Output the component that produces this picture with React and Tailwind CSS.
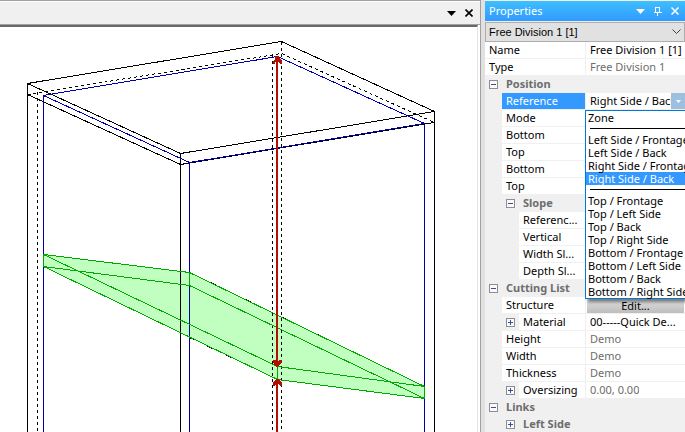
import { useState } from "react";

const groups = [
  ["Zone"],
  ["Left Side / Frontage", "Left Side / Back", "Right Side / Frontage", "Right Side / Back"],
  [
    "Top / Frontage",
    "Top / Left Side",
    "Top / Back",
    "Top / Right Side",
    "Bottom / Frontage",
    "Bottom / Left Side",
    "Bottom / Back",
    "Bottom / Right Side",
  ],
];

function Expander({ open, label }) {
  return (
    <button
      type="button"
      aria-label={`Toggle ${label}`}
      aria-expanded={open}
      className="mx-1 block size-[9px] shrink-0 self-center rounded-[1px] bg-white"
    >
      <svg viewBox="0 0 9 9" className="size-[9px]" shapeRendering="crispEdges">
        <rect x="0.5" y="0.5" width="8" height="8" fill="#fafafa" stroke="#8e8e8e" />
        <path d={open ? "M2 4.5h5" : "M2 4.5h5M4.5 2v5"} stroke="#3c4f9c" />
      </svg>
    </button>
  );
}

// Indent gutter, one block per level
function Indent({ level }) {
  if (level === 0) return null;
  return <span className={level === 1 ? "w-[17px] shrink-0" : "w-[34px] shrink-0"} />;
}

function Category({ label, level = 0, open = true }) {
  return (
    <div className="flex h-[17px] items-start font-bold text-[#6d6d6d]">
      <Indent level={level} />
      <Expander open={open} label={label} />
      <span className="pl-1">{label}</span>
    </div>
  );
}

function Row({ label, level = 1, expandable, muted, selected, children }) {
  return (
    <div className="flex h-[17px] border-b border-[#f0f0f0]">
      <div className="flex w-[101px] shrink-0 border-r border-[#f0f0f0]">
        <Indent level={level} />
        {expandable && <Expander open={false} label={label} />}
        <span
          className={`min-w-0 flex-1 truncate pl-1 ${selected ? "bg-[#3399ff] text-white" : "bg-white"}`}
        >
          {label}
        </span>
      </div>
      <div className={`flex min-w-0 flex-1 bg-white ${muted ? "text-[#6d6d6d]" : ""}`}>
        {typeof children === "string" ? <span className="truncate pl-1">{children}</span> : children}
      </div>
    </div>
  );
}

function ReferenceMenu({ value, onSelect }) {
  return (
    <div
      role="listbox"
      aria-label="Reference"
      className="absolute top-[17px] -left-px z-10 w-[120px] border border-[#0078d7] bg-white shadow-[3px_3px_3px_rgba(0,0,0,0.45)]"
    >
      {groups.map((items, i) => (
        <div key={i}>
          {i > 0 && (
            <div className="flex h-[9px] items-center px-1">
              <span className="h-px w-full bg-black" />
            </div>
          )}
          {items.map((item) => (
            <button
              key={item}
              type="button"
              role="option"
              aria-selected={item === value}
              onClick={() => onSelect(item)}
              className={`block h-[13px] w-full pl-[2px] text-left leading-[13px] whitespace-nowrap ${
                item === value ? "bg-[#3399ff] text-white" : ""
              }`}
            >
              {item}
            </button>
          ))}
        </div>
      ))}
    </div>
  );
}

function Cabinet() {
  return (
    <svg
      viewBox="0 27 477 405"
      className="block w-full"
      fill="none"
      shapeRendering="crispEdges"
      role="img"
      aria-label="Cabinet wireframe"
    >
      <path
        d="M43.5 254.5L189.5 272.5L424.5 386.5V398.5L277.5 379.5L43.5 266.5Z"
        fill="#c0ffc0"
      />
      <g stroke="#000">
        <path d="M27.5 432V83.5L281.5 41.5L434.5 111.5V432" />
        <path d="M27.5 83.5L180.5 153.5L434.5 111.5M180.5 153.5V432" />
        <path d="M27.5 94.5L180.5 164.5L434.5 122.5" />
        <path d="M27.5 94.5L281.5 53.5L434.5 122.5" strokeDasharray="3 3" />
        <path d="M37.5 92V432M272.5 55V432M281.5 42V432" strokeDasharray="3 3" />
      </g>
      <path
        d="M43.5 432V95.5L277.5 56.5L424.5 123.5V432M43.5 95.5L189.5 162.5L424.5 123.5M189.5 162.5V432"
        stroke="#0000a8"
      />
      <path d="M192 273.5L424.5 386.5M189.5 337.5L277.5 379.5" stroke="#000" strokeDasharray="6 14" />
      <g stroke="#00a800">
        <path d="M43.5 254.5L189.5 272.5L424.5 386.5L277.5 366.5Z" />
        <path d="M43.5 266.5L189.5 285.5L424.5 398.5L277.5 379.5Z" />
        <path d="M43.5 254.5V266.5M189.5 272.5V285.5M277.5 366.5V379.5M424.5 386.5V398.5" />
      </g>
      <g stroke="#b01000" strokeWidth="2">
        <path d="M277 57V366M277 380V432" />
        <g fill="#b01000" stroke="none">
          <path d="M275 56H279V58L282 61V64H280L278 61H276L275 64H273V61L275 59Z" />
          <path d="M273 360H275L277 362L280 360H282V362L278 367H276L273 362Z" />
          <path d="M276 379H279L282 383V386H280L278 384H276L275 386H273V383Z" />
        </g>
      </g>
    </svg>
  );
}

export default function App() {
  const [reference, setReference] = useState("Right Side / Back");

  return (
    <div className="flex h-screen overflow-hidden bg-[#e1e1e1] font-['Noto_Sans','Open_Sans',sans-serif] text-[11px] leading-[16px] text-black">
      <main className="flex min-w-0 flex-1 flex-col border-t border-r border-[#a0a0a0] bg-white">
        <div className="flex h-6 shrink-0 items-center justify-end gap-[9px] border-t border-b border-t-white border-b-[#a0a0a0] bg-[#f0f0f0] pr-[7px]">
          <button type="button" aria-label="Window list">
            <svg viewBox="0 0 9 5" className="h-[5px] w-[9px]">
              <path d="M0 0h9L4.500 5z" fill="#000" />
            </svg>
          </button>
          <button type="button" aria-label="Close view">
            <svg viewBox="0 0 8 8" className="size-2">
              <path d="M0.500 0.500l7 7M7.500 0.500l-7 7" stroke="#000" strokeWidth="1.600" />
            </svg>
          </button>
        </div>
        <div className="mr-[2px] min-h-0 flex-1 border-t-2 border-r border-t-[#696969] border-r-[#e3e3e3]">
          <Cabinet />
        </div>
      </main>

      <aside className="ml-1 w-[200px] shrink-0 bg-[#f0f0f0] pt-px">
        <header className="flex h-5 items-center bg-linear-to-b from-[#3fbfff] to-[#3399ff] pr-[6px] pl-1 text-white">
          <h2 className="flex-1">Properties</h2>
          <div className="flex items-center gap-[9px]">
            <button type="button" aria-label="Menu">
              <svg viewBox="0 0 9 5" className="h-[5px] w-[9px]">
                <path d="M0 0h9L4.500 5z" fill="#fff" />
              </svg>
            </button>
            <button type="button" aria-label="Auto hide">
              <svg viewBox="0 0 8 9" className="h-[9px] w-2" fill="none" stroke="#fff" shapeRendering="crispEdges">
                <path d="M1.500 5V0.500H5.500V5M5 0V5M0 5.500H8M3.500 6V9" />
              </svg>
            </button>
            <button type="button" aria-label="Close">
              <svg viewBox="0 0 8 8" className="size-2">
                <path d="M0.500 0.500l7 7M7.500 0.500l-7 7" stroke="#fff" strokeWidth="1.500" />
              </svg>
            </button>
          </div>
        </header>

        <div className="relative mt-px">
          <select
            aria-label="Object"
            className="block h-5 w-full appearance-none border border-[#adadad] bg-[#e1e1e1] pl-[3px] font-['Liberation_Sans',Arial,sans-serif] text-[11px] leading-[16px]"
          >
            <option>Free Division 1 [1]</option>
          </select>
          <svg
            viewBox="0 0 9 5"
            className="pointer-events-none absolute top-[7px] right-1 h-[5px] w-[9px]"
            fill="none"
          >
            <path d="M0.500 0.500l4 4l4-4" stroke="#404040" />
          </svg>
        </div>

        <Row label="Name" level={0}>Free Division 1 [1]</Row>
        <Row label="Type" level={0} muted>Free Division 1</Row>

        <Category label="Position" />
        <Row label="Reference" selected>
          <div className="relative flex min-w-0 flex-1">
            <span className="min-w-0 flex-1 overflow-hidden pl-1 whitespace-nowrap">{reference}</span>
            <button
              type="button"
              aria-label="Choose reference"
              className="flex w-[14px] shrink-0 items-center justify-center bg-[#9dbfe0]"
            >
              <svg viewBox="0 0 5 3" className="h-[3px] w-[5px]">
                <path d="M0 0h5L2.500 3z" fill="#fff" />
              </svg>
            </button>
            <ReferenceMenu value={reference} onSelect={setReference} />
          </div>
        </Row>
        <Row label="Mode" />
        <Row label="Bottom" />
        <Row label="Top" />
        <Row label="Bottom" />
        <Row label="Top" />
        <Category label="Slope" level={1} />
        <Row label="Referenc..." level={2} />
        <Row label="Vertical" level={2} />
        <Row label="Width Sl..." level={2} />
        <Row label="Depth Sl..." level={2} />

        <Category label="Cutting List" />
        <Row label="Structure">
          <button
            type="button"
            className="mx-px mt-px flex-1 bg-linear-to-b from-[#e4e4e4] to-[#bdbdbd] leading-[14px]"
          >
            Edit...
          </button>
        </Row>
        <Row label="Material" expandable>00-----Quick De...</Row>
        <Row label="Height" muted>Demo</Row>
        <Row label="Width" muted>Demo</Row>
        <Row label="Thickness" muted>Demo</Row>
        <Row label="Oversizing" expandable muted>0.00, 0.00</Row>

        <Category label="Links" />
        <Category label="Left Side" level={1} open={false} />
      </aside>
    </div>
  );
}
